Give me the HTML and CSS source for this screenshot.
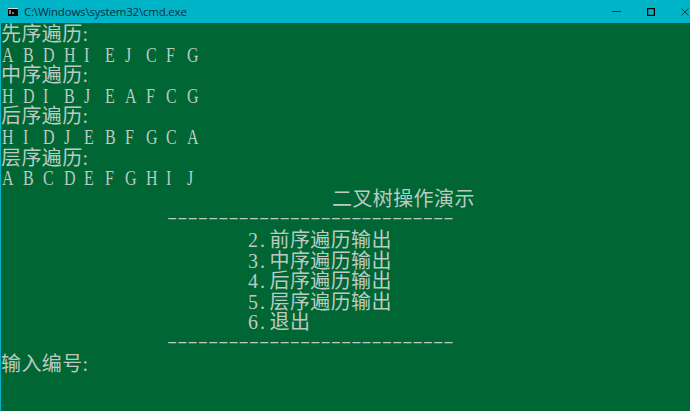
FILE: index.html
```html
<!DOCTYPE html>
<html>
<head>
    <title>C:\Windows\system32\cmd.exe</title>
    <link rel="stylesheet" href="styles.css">
</head>
<body>
    <div class="titlebar">
        <svg class="app-icon" width="10" height="8" viewBox="0 0 10 8">
            <rect width="10" height="8" fill="#000"/>
            <rect x="0" y="0" width="10" height="1" fill="#ddd"/>
            <path d="M1 3h2M1 5h2M4 5h2" stroke="#fff" stroke-width="1"/>
        </svg>
        <span class="title">C:\Windows\system32\cmd.exe</span>
        <div class="controls">
            <svg width="9" height="8" viewBox="0 0 9 8"><path d="M0 3.5h9" stroke="#0b3b4a"/></svg>
            <svg width="8" height="8" viewBox="0 0 8 8"><rect x="0.6" y="0.6" width="6.8" height="6.8" fill="none" stroke="#000" stroke-width="1.2"/></svg>
            <svg width="8" height="8" viewBox="0 0 8 8"><path d="M0.5 0.5l7 7M7.5 0.5l-7 7" stroke="#0b3b4a"/></svg>
        </div>
    </div>
    <div class="console">
        <div class="line">先序遍历:</div>
        <div class="line letters"><span>A</span><span>B</span><span>D</span><span>H</span><span>I</span><span>E</span><span>J</span><span>C</span><span>F</span><span>G</span></div>
        <div class="line">中序遍历:</div>
        <div class="line letters"><span>H</span><span>D</span><span>I</span><span>B</span><span>J</span><span>E</span><span>A</span><span>F</span><span>C</span><span>G</span></div>
        <div class="line">后序遍历:</div>
        <div class="line letters"><span>H</span><span>I</span><span>D</span><span>J</span><span>E</span><span>B</span><span>F</span><span>G</span><span>C</span><span>A</span></div>
        <div class="line">层序遍历:</div>
        <div class="line letters"><span>A</span><span>B</span><span>C</span><span>D</span><span>E</span><span>F</span><span>G</span><span>H</span><span>I</span><span>J</span></div>
        <div class="line heading">二叉树操作演示</div>
        <div class="line rule"><span>----------------------------</span></div>
        <div class="line item"><b>2.</b>前序遍历输出</div>
        <div class="line item"><b>3.</b>中序遍历输出</div>
        <div class="line item"><b>4.</b>后序遍历输出</div>
        <div class="line item"><b>5.</b>层序遍历输出</div>
        <div class="line item"><b>6.</b>退出</div>
        <div class="line rule"><span>----------------------------</span></div>
        <div class="line">输入编号:</div>
    </div>
</body>
</html>
```

FILE: styles.css
```css
html, body { margin: 0; height: 100%; overflow: hidden; }
body { display: flex; flex-direction: column; background: #006633; border-left: 1px solid #00b4c8; }
.titlebar { display: flex; align-items: center; height: 23px; flex: none; margin-left: -1px; padding-left: 8px; background: #00b4c8; }
.app-icon { margin-right: 6px; }
.title { font: 11.5px "Open Sans", "Noto Sans", sans-serif; color: #0a2f3f; letter-spacing: -0.2px; }
.controls { display: flex; gap: 26px; margin-left: auto; margin-right: 1px; }
.console { padding-top: 1px; color: #bccac4; font: 20px/20.6px "Liberation Serif", "Noto Sans CJK SC", serif; letter-spacing: 0.4px; }
.line { height: 20.6px; white-space: pre; }
.letters { display: flex; padding-left: 1px; font-size: 20px; }
.letters span { width: 20.5px; transform: scaleX(0.8); transform-origin: 0 50%; }
.heading { padding-left: 331px; }
.rule { padding-left: 166px; font-size: 16px; line-height: 17.3px; letter-spacing: 0; }
.rule span { display: inline-block; transform: scaleX(1.92); transform-origin: 0 50%; }
.item { padding-left: 247px; }
.item b { display: inline-block; width: 21.5px; font-weight: normal; letter-spacing: 2px; }
```
